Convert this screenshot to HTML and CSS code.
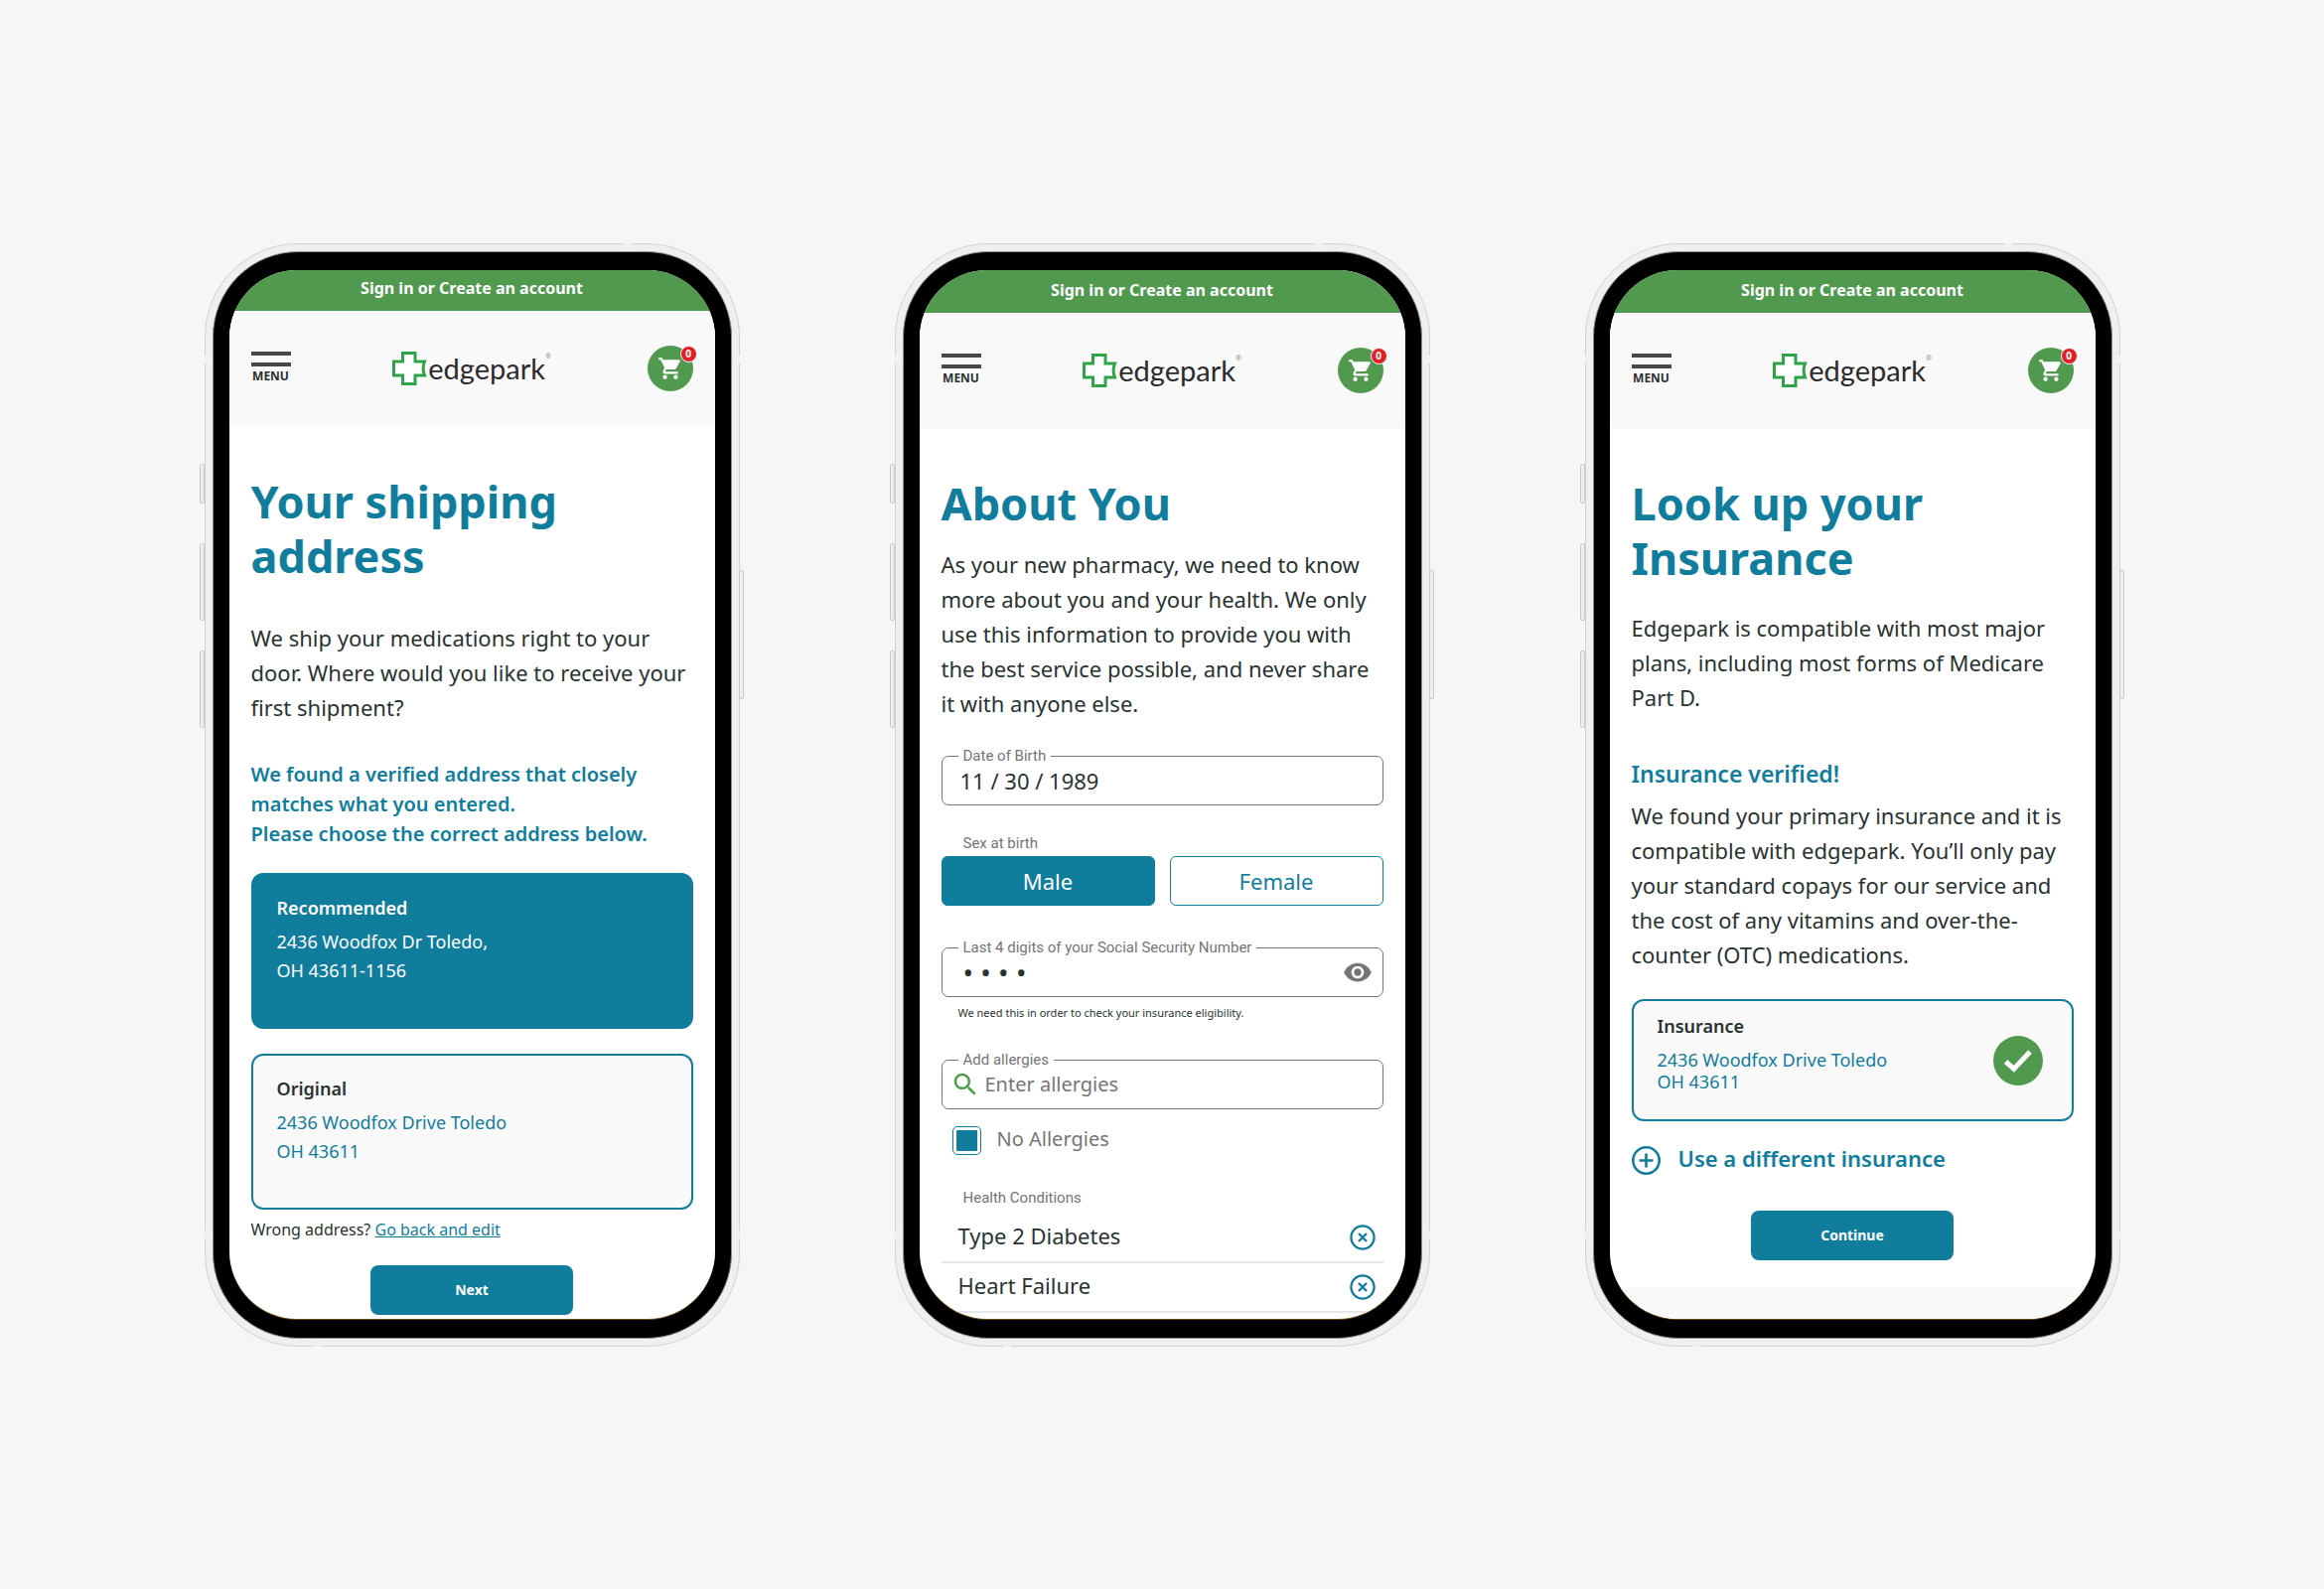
FILE: index.html
```html
<!DOCTYPE html>
<html lang="en">
<head>
<meta charset="utf-8">
<meta name="viewport" content="width=device-width, initial-scale=1">
<title>Edgepark pharmacy onboarding</title>
<link rel="stylesheet" href="styles.css">
</head>
<body>
<svg class="sprite" aria-hidden="true">
  <symbol id="cross" viewBox="0 0 35 34">
    <path d="M10.5 1.5h12.5v8.5h9.5c-1.800 4.500-1.800 9.500 0 14H23v8.500H10.500V24H1.500V10h9z" fill="#fff" stroke="#2fa34a" stroke-width="3"/>
  </symbol>
  <symbol id="cart" viewBox="0 0 24 24">
    <path fill="currentColor" d="M7 18c-1.100 0-1.990.9-1.990 2S5.900 22 7 22s2-.9 2-2-.9-2-2-2zM1 2v2h2l3.600 7.590-1.350 2.450c-.16.28-.25.610-.25.960 0 1.100.9 2 2 2h12v-2H7.420c-.14 0-.25-.11-.25-.25l.03-.12.9-1.630h7.450c.75 0 1.410-.41 1.750-1.030l3.580-6.490c.08-.14.12-.31.12-.48 0-.55-.45-1-1-1H5.210l-.94-2H1zm16 16c-1.100 0-1.990.9-1.990 2s.89 2 1.990 2 2-.9 2-2-.9-2-2-2z"/>
  </symbol>
  <symbol id="eye" viewBox="0 0 24 24">
    <path fill="currentColor" d="M12 4.500C7 4.500 2.730 7.610 1 12c1.730 4.390 6 7.500 11 7.500s9.270-3.110 11-7.500c-1.730-4.390-6-7.500-11-7.500zM12 17c-2.760 0-5-2.240-5-5s2.240-5 5-5 5 2.240 5 5-2.240 5-5 5zm0-8c-1.660 0-3 1.340-3 3s1.340 3 3 3 3-1.340 3-3-1.340-3-3-3z"/>
  </symbol>
  <symbol id="search" viewBox="0 0 24 24">
    <path fill="currentColor" d="M15.500 14h-.79l-.28-.27C15.410 12.590 16 11.110 16 9.500 16 5.910 13.090 3 9.500 3S3 5.910 3 9.500 5.910 16 9.500 16c1.610 0 3.090-.59 4.230-1.570l.27.28v.79l5 4.990L20.490 19l-4.990-5zm-6 0C7.010 14 5 11.990 5 9.500S7.010 5 9.500 5 14 7.010 14 9.500 11.990 14 9.500 14z"/>
  </symbol>
  <symbol id="remove" viewBox="0 0 26 26">
    <circle cx="13" cy="13" r="11.600" fill="none" stroke="currentColor" stroke-width="2.200"/>
    <path d="M9 9l8 8M17 9l-8 8" stroke="currentColor" stroke-width="2.400"/>
  </symbol>
  <symbol id="add" viewBox="0 0 29 29">
    <circle cx="14.500" cy="14.500" r="13.200" fill="none" stroke="currentColor" stroke-width="2.600"/>
    <path d="M14.500 7.500v14M7.500 14.500h14" stroke="currentColor" stroke-width="2.600"/>
  </symbol>
  <symbol id="done" viewBox="0 0 50 50">
    <circle cx="25" cy="25" r="25" fill="#50994f"/>
    <path d="M12.500 26l8.300 7.300L37 16" fill="none" stroke="#fff" stroke-width="5"/>
  </symbol>
</svg>

<main class="stage">

  <section class="phone" aria-label="Shipping address">
    <span class="key key-mute"></span><span class="key key-up"></span><span class="key key-down"></span><span class="key key-power"></span>
    <span class="band band-top"></span><span class="band band-bottom"></span>
    <span class="band band-left-high"></span><span class="band band-left-low"></span>
    <span class="band band-right-high"></span><span class="band band-right-low"></span>
    <div class="bezel"><div class="screen">
      <div class="banner banner-short"><a href="#">Sign in or Create an account</a></div>
      <header class="header">
        <button class="menu" type="button"><span class="menu-bar"></span><span class="menu-bar"></span><span class="menu-text">MENU</span></button>
        <a class="logo" href="#"><svg class="logo-mark" aria-hidden="true"><use href="#cross"/></svg><span class="logo-name">edgepark</span><span class="logo-reg">®</span></a>
        <button class="cart" type="button" aria-label="Cart"><svg class="cart-icon" aria-hidden="true"><use href="#cart"/></svg><span class="badge">0</span></button>
      </header>
      <div class="content">
        <h1>Your shipping address</h1>
        <p class="text ship-intro">We ship your medications right to your door. Where would you like to receive your first shipment?</p>
        <p class="notice">We found a verified address that closely matches what you entered.<br>Please choose the correct address below.</p>
        <div class="choices">
          <button class="card card-selected" type="button" aria-pressed="true">
            <span class="card-title">Recommended</span>
            <span class="card-address">2436 Woodfox Dr Toledo,<br>OH 43611-1156</span>
          </button>
          <button class="card" type="button" aria-pressed="false">
            <span class="card-title">Original</span>
            <span class="card-address">2436 Woodfox Drive Toledo<br>OH 43611</span>
          </button>
        </div>
        <p class="wrong">Wrong address? <a href="#">Go back and edit</a></p>
        <button class="primary next" type="button">Next</button>
      </div>
    </div></div>
  </section>

  <section class="phone" aria-label="About you">
    <span class="key key-mute"></span><span class="key key-up"></span><span class="key key-down"></span><span class="key key-power"></span>
    <span class="band band-top"></span><span class="band band-bottom"></span>
    <span class="band band-left-high"></span><span class="band band-left-low"></span>
    <span class="band band-right-high"></span><span class="band band-right-low"></span>
    <div class="bezel"><div class="screen">
      <div class="banner"><a href="#">Sign in or Create an account</a></div>
      <header class="header">
        <button class="menu" type="button"><span class="menu-bar"></span><span class="menu-bar"></span><span class="menu-text">MENU</span></button>
        <a class="logo" href="#"><svg class="logo-mark" aria-hidden="true"><use href="#cross"/></svg><span class="logo-name">edgepark</span><span class="logo-reg">®</span></a>
        <button class="cart" type="button" aria-label="Cart"><svg class="cart-icon" aria-hidden="true"><use href="#cart"/></svg><span class="badge">0</span></button>
      </header>
      <div class="content">
        <h1>About You</h1>
        <p class="text about-intro">As your new pharmacy, we need to know more about you and your health. We only use this information to provide you with the best service possible, and never share it with anyone else.</p>
        <div class="field dob">
          <label for="dob">Date of Birth</label>
          <input id="dob" type="text" value="11 / 30 / 1989">
        </div>
        <p class="caption sex-caption" id="sex-label">Sex at birth</p>
        <div class="segment" role="group" aria-labelledby="sex-label">
          <button class="option option-selected" type="button" aria-pressed="true">Male</button>
          <button class="option" type="button" aria-pressed="false">Female</button>
        </div>
        <div class="field ssn">
          <label for="ssn">Last 4 digits of your Social Security Number</label>
          <input id="ssn" class="masked" type="text" value="• • • •" aria-describedby="ssn-hint">
          <button class="reveal" type="button" aria-label="Show digits"><svg class="icon-30" aria-hidden="true"><use href="#eye"/></svg></button>
        </div>
        <p class="hint" id="ssn-hint">We need this in order to check your insurance eligibility.</p>
        <div class="field allergies">
          <label for="allergies">Add allergies</label>
          <svg class="icon-30 search-icon" aria-hidden="true"><use href="#search"/></svg>
          <input id="allergies" class="search-input" type="text" placeholder="Enter allergies">
        </div>
        <div class="check">
          <input id="none" type="checkbox" checked>
          <label for="none">No Allergies</label>
        </div>
        <p class="caption health-caption">Health Conditions</p>
        <ul class="conditions">
          <li><span>Type 2 Diabetes</span><button type="button" aria-label="Remove Type 2 Diabetes"><svg class="icon-26" aria-hidden="true"><use href="#remove"/></svg></button></li>
          <li><span>Heart Failure</span><button type="button" aria-label="Remove Heart Failure"><svg class="icon-26" aria-hidden="true"><use href="#remove"/></svg></button></li>
        </ul>
      </div>
    </div></div>
  </section>

  <section class="phone" aria-label="Insurance">
    <span class="key key-mute"></span><span class="key key-up"></span><span class="key key-down"></span><span class="key key-power"></span>
    <span class="band band-top"></span><span class="band band-bottom"></span>
    <span class="band band-left-high"></span><span class="band band-left-low"></span>
    <span class="band band-right-high"></span><span class="band band-right-low"></span>
    <div class="bezel"><div class="screen">
      <div class="banner"><a href="#">Sign in or Create an account</a></div>
      <header class="header">
        <button class="menu" type="button"><span class="menu-bar"></span><span class="menu-bar"></span><span class="menu-text">MENU</span></button>
        <a class="logo" href="#"><svg class="logo-mark" aria-hidden="true"><use href="#cross"/></svg><span class="logo-name">edgepark</span><span class="logo-reg">®</span></a>
        <button class="cart" type="button" aria-label="Cart"><svg class="cart-icon" aria-hidden="true"><use href="#cart"/></svg><span class="badge">0</span></button>
      </header>
      <div class="content content-insurance">
        <h1>Look up your Insurance</h1>
        <p class="text lookup-intro">Edgepark is compatible with most major plans, including most forms of Medicare Part D.</p>
        <h2>Insurance verified!</h2>
        <p class="text verified-text">We found your primary insurance and it is compatible with edgepark. You’ll only pay your standard copays for our service and the cost of any vitamins and over-the-counter (OTC) medications.</p>
        <div class="plan">
          <div class="plan-info">
            <p class="card-title">Insurance</p>
            <p class="plan-address">2436 Woodfox Drive Toledo<br>OH 43611</p>
          </div>
          <svg class="plan-done" role="img" aria-label="Verified"><use href="#done"/></svg>
        </div>
        <button class="different" type="button"><svg class="icon-29" aria-hidden="true"><use href="#add"/></svg><span>Use a different insurance</span></button>
        <button class="primary continue" type="button">Continue</button>
      </div>
      <footer class="footer"></footer>
    </div></div>
  </section>

</main>
</body>
</html>
```
FILE: styles.css
```css
:root {
  --teal: #107d9d;
  --green: #50994f;
  --ink: #293231;
  --grey: #757575;
  --panel: #f9f9f9;
}

* { box-sizing: border-box; }

body {
  margin: 0;
  background: #f6f6f6;
  color: var(--ink);
  font-family: "Noto Sans", "Open Sans", sans-serif;
}

h1, h2, p, ul { margin: 0; padding: 0; }

button, input { font-family: inherit; color: inherit; }
button { border: 0; padding: 0; background: none; cursor: pointer; }
svg { display: block; flex: none; }

.sprite { position: absolute; width: 0; height: 0; }

.stage {
  min-height: 100vh;
  display: flex;
  justify-content: center;
  align-items: center;
  gap: 156px;
}

/* Device */
.phone {
  position: relative;
  flex: 0 1 539px;
  min-width: 0;
  padding: 7px;
  border: 1px solid #d2d2d2;
  border-radius: 94px;
  background: #efefef;
  display: flex;
}

.bezel {
  flex: 1;
  min-width: 0;
  display: flex;
  padding: 18px 16px 19px;
  border: 1px solid #8c8c8c;
  border-radius: 86px;
  background: #000;
}

.screen {
  flex: 1;
  min-width: 0;
  min-height: 1056px;
  display: flex;
  flex-direction: column;
  overflow: hidden;
  border-radius: 68px;
  background: #fff;
  box-shadow: 0 1px 0 #6b4c12;
}

.key {
  position: absolute;
  width: 5px;
  border: 1px solid #cbc8c5;
  border-radius: 2px;
  background: #efeeec;
}
.key-mute { left: -6px; top: 221px; height: 40px; }
.key-up { left: -6px; top: 301px; height: 78px; }
.key-down { left: -6px; top: 409px; height: 78px; }
.key-power { right: -5px; top: 328px; height: 130px; }

.band { position: absolute; width: 8px; height: 8px; background: #f2f1ef; }
.band-top { top: -1px; right: 108px; }
.band-bottom { bottom: -1px; left: 108px; }
.band-left-high { left: -1px; top: 112px; }
.band-left-low { left: -1px; bottom: 108px; }
.band-right-high { right: -1px; top: 112px; }
.band-right-low { right: -1px; bottom: 108px; }

/* Top of every screen */
.banner {
  flex: none;
  height: 43px;
  display: flex;
  justify-content: center;
  background: var(--green);
}
.banner-short { height: 41px; }
.banner a {
  color: #fff;
  font-size: 16px;
  font-weight: 700;
  line-height: 40px;
  text-decoration: none;
}
.banner-short a { line-height: 37px; }

.header {
  flex: none;
  height: 116px;
  padding: 0 22px;
  display: grid;
  grid-template-columns: 1fr auto 1fr;
  align-items: center;
  background: var(--panel);
}

.menu {
  justify-self: start;
  width: 40px;
  padding-bottom: 2px;
  display: flex;
  flex-direction: column;
  gap: 7px;
}
.menu-bar { height: 4px; background: #484848; }
.menu-text {
  font-size: 12px;
  font-weight: 700;
  line-height: 12px;
  margin-top: -3px;
  text-align: center;
}

.logo {
  display: flex;
  color: #2c2b2d;
  text-decoration: none;
}
.logo-mark { width: 35px; height: 34px; }
.logo-name {
  padding-left: 1px;
  font-family: Lato, sans-serif;
  font-size: 29px;
  line-height: 34px;
}
.logo-reg {
  color: #8d8d8d;
  font-size: 7px;
  line-height: 9px;
}

.cart {
  position: relative;
  justify-self: end;
  width: 46px;
  height: 46px;
  display: grid;
  place-items: center;
  border-radius: 50%;
  background: var(--green);
  color: #fff;
}
.cart-icon { width: 26px; height: 26px; }
.badge {
  position: absolute;
  top: 0;
  right: -4px;
  width: 17px;
  height: 17px;
  border: 1px solid #fff;
  border-radius: 50%;
  background: #e01f26;
  font-size: 10px;
  font-weight: 700;
  line-height: 15px;
  text-align: center;
}

/* Page content */
.content {
  display: flex;
  flex-direction: column;
  padding: 48px 22px 4px;
}

h1 {
  color: var(--teal);
  font-size: 45px;
  font-weight: 700;
  line-height: 55px;
}
h2 {
  margin-top: 42px;
  color: var(--teal);
  font-size: 23px;
  font-weight: 600;
  line-height: 35px;
}

.text { font-size: 22px; line-height: 35px; }
.ship-intro { margin-top: 38px; }
.about-intro { margin-top: 17px; }
.lookup-intro { margin-top: 26px; }
.verified-text { margin-top: 7px; }

.notice {
  margin-top: 35px;
  color: var(--teal);
  font-size: 20px;
  font-weight: 600;
  line-height: 30px;
}

.choices {
  margin-top: 24px;
  display: flex;
  flex-direction: column;
  gap: 25px;
}
.card {
  min-height: 157px;
  padding: 19px 24px;
  border: 2px solid var(--teal);
  border-radius: 12px;
  background: var(--panel);
  display: flex;
  flex-direction: column;
  gap: 5px;
  text-align: left;
}
.card-title { font-size: 18px; font-weight: 600; line-height: 29px; }
.card-address { color: var(--teal); font-size: 18px; line-height: 29px; }
.card-selected { background: var(--teal); }
.card-selected .card-title, .card-selected .card-address { color: #fff; }

.wrong { margin-top: 8px; font-size: 16px; line-height: 24px; }
.wrong a { color: var(--teal); }

.primary {
  align-self: center;
  width: 204px;
  height: 50px;
  border-radius: 8px;
  background: var(--teal);
  color: #fff;
  font-size: 14px;
  font-weight: 700;
}
.next { margin-top: 24px; }
.continue { margin-top: 36px; }

/* Form */
.field {
  position: relative;
  height: 50px;
  display: flex;
  align-items: center;
  border: 1px solid #757575;
  border-radius: 7px;
}
.field label {
  position: absolute;
  left: 16px;
  top: -11px;
  padding: 0 5px;
  background: #fff;
  color: var(--grey);
  font-family: Roboto, sans-serif;
  font-size: 15px;
  line-height: 20px;
}
.field input {
  flex: 1;
  min-width: 0;
  height: 100%;
  padding: 0 18px;
  border: 0;
  outline: 0;
  background: transparent;
  font-size: 22px;
}
.field .masked { padding-left: 21px; font-size: 28px; }
.field .search-input { padding: 0 0 0 5px; font-size: 20px; }
.search-input::placeholder { color: var(--grey); opacity: 1; }
.search-icon { margin-left: 8px; color: #4a9c48; }
.reveal { margin-right: 10px; color: var(--grey); }
.icon-30 { width: 30px; height: 30px; }
.icon-29 { width: 29px; height: 29px; }
.icon-26 { width: 26px; height: 26px; }

.dob { margin-top: 35px; }
.ssn { margin-top: 42px; }
.allergies { margin-top: 39px; }

.caption {
  padding-left: 22px;
  color: var(--grey);
  font-family: Roboto, sans-serif;
  font-size: 15px;
  line-height: 20px;
}
.sex-caption { margin-top: 28px; }
.health-caption { margin-top: 33px; }

.segment {
  margin-top: 3px;
  display: grid;
  grid-template-columns: 1fr 1fr;
  gap: 15px;
}
.option {
  height: 50px;
  border: 1px solid var(--teal);
  border-radius: 6px;
  background: #fff;
  color: var(--teal);
  font-size: 22px;
}
.option-selected { background: var(--teal); color: #fff; }

.hint { margin-top: 8px; padding-left: 17px; font-size: 11px; line-height: 16px; }

.check {
  margin: 17px 0 0 11px;
  display: flex;
  align-items: center;
  gap: 16px;
}
.check input {
  appearance: none;
  width: 29px;
  height: 29px;
  margin: 0;
  padding: 3px;
  border: 1px solid var(--teal);
  border-radius: 5px;
}
.check input:checked { background: var(--teal) content-box; }
.check label { padding-bottom: 2px; color: var(--grey); font-size: 20px; line-height: 24px; }

.conditions { margin-top: 6px; list-style: none; }
.conditions li {
  height: 50px;
  padding: 0 8px 0 17px;
  display: flex;
  align-items: center;
  justify-content: space-between;
  border-bottom: 2px solid #e6e6e6;
  font-size: 22px;
  line-height: 30px;
}
.conditions span { padding-bottom: 4px; }
.conditions button { color: var(--teal); }

/* Insurance */
.content-insurance { padding-bottom: 28px; }
.plan {
  margin-top: 27px;
  min-height: 123px;
  padding: 11px 29px 0 24px;
  display: flex;
  justify-content: space-between;
  border: 2px solid var(--teal);
  border-radius: 12px;
  background: var(--panel);
}
.plan-info { display: flex; flex-direction: column; gap: 8px; }
.plan-address { color: var(--teal); font-size: 18px; line-height: 22px; }
.plan-done { width: 50px; height: 50px; margin-top: 24px; }

.different {
  margin-top: 25px;
  display: flex;
  align-items: center;
  gap: 18px;
  color: var(--teal);
  font-size: 22px;
  font-weight: 600;
  line-height: 25px;
}
.different span { padding-bottom: 4px; }

.footer { flex: 1; background: var(--panel); }
```
